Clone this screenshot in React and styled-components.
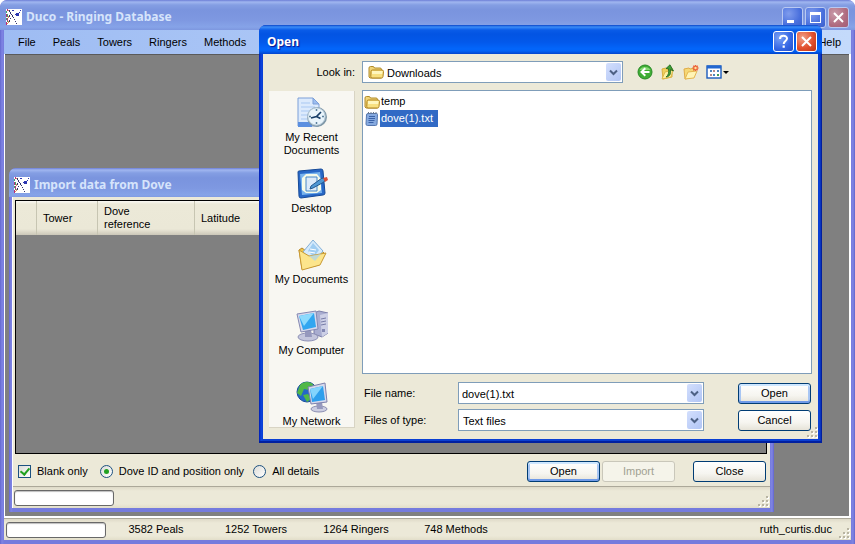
import React, { useState } from 'react'
import styled, { createGlobalStyle, css } from 'styled-components'

const GlobalStyle = createGlobalStyle`
  * {
    box-sizing: border-box;
  }
  body {
    margin: 0;
    font-family: 'Liberation Sans', Arial, sans-serif;
    font-size: 11px;
    line-height: 13px;
    color: #000;
  }
  button, input, select {
    font: inherit;
    color: inherit;
    margin: 0;
  }
`

/* ---------- window chrome ---------- */

const inactiveFrame = css`
  background: linear-gradient(to right, #6468cf 0, #7f84e4 2px, #757bdd 4px, #757bdd calc(100% - 4px), #8085e4 calc(100% - 2px), #6165cb 100%);
`

const MainWindow = styled.div`
  position: relative;
  display: flex;
  flex-direction: column;
  min-height: 100vh;
  padding: 0 4px 4px;
  border-radius: 7px 7px 0 0;
  overflow: hidden;
  ${inactiveFrame}
`

const ImportWindow = styled.section`
  position: absolute;
  left: 9px;
  right: 81px;
  top: 168px;
  bottom: 32px;
  display: flex;
  flex-direction: column;
  padding: 0 4px 4px 3px;
  border-radius: 7px 7px 0 0;
  overflow: hidden;
  ${inactiveFrame}
`

const Dialog = styled.section`
  position: absolute;
  left: 259px;
  right: 33px;
  top: 25px;
  bottom: 101px;
  display: flex;
  flex-direction: column;
  padding: 0 4px 4px;
  border-radius: 7px 7px 0 0;
  background: linear-gradient(to right, #0019b0 0, #0b44dc 2px, #0a3fd2 4px, #0a3fd2 calc(100% - 4px), #0a3fd2 calc(100% - 2px), #00138c 100%);
  box-shadow: inset 0 -2px 0 #001fa0;
`

const TitleBar = styled.header`
  display: flex;
  flex: none;
  align-items: center;
  gap: 4px;
  height: ${({ $tall }) => ($tall ? 30 : 29)}px;
  margin: 0 -4px;
  padding: ${({ $active }) => ($active ? '4px 5px 0 8px' : '4px 6px 0')};
  border-radius: 7px 7px 0 0;
  background: ${({ $active }) =>
    $active
      ? 'linear-gradient(#0a45c8 0, #3a8cf8 2px, #0a5ce8 5px, #0354e3 9px, #0358ea 17px, #0366fb 24px, #0262f5 26px, #0344cc 29px)'
      : 'linear-gradient(#6d7ed6 0, #a0b6f0 2px, #849ee3 5px, #7a94de 10px, #7e98e1 20px, #86a3e8 27px, #7d97df 30px)'};
`

const Title = styled.h1`
  flex: 1;
  margin: 0;
  font-family: 'Noto Sans', 'Open Sans', sans-serif;
  font-size: 12px;
  line-height: 16px;
  font-weight: 700;
  white-space: nowrap;
  color: ${({ $active }) => ($active ? '#fff' : '#d6e4fb')};
  text-shadow: ${({ $active }) => ($active ? '1px 1px 1px #0f1089' : 'none')};
`

const CaptionButtons = styled.div`
  display: flex;
  gap: 2px;
`

const captionColors = {
  blue: 'radial-gradient(circle at 30% 30%, #7ba3f5, #3566e4 60%, #2450c8)',
  red: 'radial-gradient(circle at 30% 30%, #f0a088, #e2512f 55%, #bd3212)',
  pale: 'radial-gradient(circle at 30% 30%, #7f9ced, #4a70dd 60%, #3b60cc)',
  rose: 'radial-gradient(circle at 30% 30%, #c99bab, #b06c80 60%, #a25d76)',
}

const CaptionButton = styled.button`
  display: grid;
  place-items: center;
  width: 21px;
  height: 21px;
  padding: 0;
  border: 1px solid ${({ $tone }) => ($tone === 'blue' || $tone === 'red' ? '#fff' : '#b9c9f2')};
  border-radius: 3px;
  background: ${({ $tone }) => captionColors[$tone]};
`

/* ---------- main window ---------- */

const MenuBar = styled.nav`
  display: flex;
  align-items: center;
  height: 24px;
  padding: 0 2px 0 5px;
  background: linear-gradient(to right, #9ebcf3, #c4dafb);
`

const MenuItem = styled.button`
  padding: 0 8px 0 9px;
  border: 0;
  background: none;
  line-height: 19px;
  &:last-child {
    margin-left: auto;
  }
`

const Workspace = styled.main`
  flex: 1;
  border: solid #fff;
  border-width: 0 2px 2px 1px;
  background: #808080;
  box-shadow: inset 0 1px 0 #5a5a5a;
`

const StatusBar = styled.footer`
  display: flex;
  align-items: center;
  height: ${({ $height }) => $height}px;
  padding: ${({ $main }) => ($main ? '0 1px 0 2px' : '0 1px')};
  border-top: 1px solid #aca899;
  background: linear-gradient(#dedac8, #ece9d8 4px, #ece9d8 80%, #e2dec9);
`

const Progress = styled.progress`
  appearance: none;
  display: block;
  width: 100px;
  height: 16px;
  border: 1px solid #686868;
  border-radius: 3px;
  background: #fff;
  box-shadow: inset 0 1px 1px #bebebe;
  &::-webkit-progress-bar {
    background: transparent;
  }
`

const StatusCell = styled.span`
  width: 100px;
  text-align: center;
`

const StatusFile = styled.span`
  margin-left: auto;
  margin-right: 6px;
`

const GripSvg = styled.svg`
  flex: none;
  align-self: flex-end;
  margin-bottom: 1px;
`

/* ---------- import window ---------- */

const ImportBody = styled.form`
  flex: 1;
  display: flex;
  flex-direction: column;
  border-left: 1px solid #fff;
  background: #ece9d8;
`

const GridFrame = styled.div`
  flex: 1;
  margin: 3px 3px 0 2px;
  border: 1px solid #000;
  background: #808080;
`

const Grid = styled.table`
  width: 100%;
  table-layout: fixed;
  border-collapse: collapse;
`

const HeadCell = styled.th`
  width: ${({ $width }) => ($width ? `${$width}px` : 'auto')};
  height: 34px;
  padding: 0 30px 0 6px;
  font-weight: 400;
  text-align: left;
  background: linear-gradient(#faf9f4, #ece9d8 3px, #ebe8d7 28px, #cbc7b8 34px);
  box-shadow: inset -1px 0 0 #c7c5b2;
  &:first-child,
  &:nth-child(2) {
    padding-right: 0;
  }
`

const Options = styled.div`
  display: flex;
  align-items: center;
  height: 32px;
  padding: 3px 4px 0 5px;
`

const Choice = styled.label`
  display: flex;
  align-items: center;
  gap: 6px;
  margin-right: ${({ $gap }) => $gap}px;
  white-space: nowrap;
`

const Tick = styled.input`
  appearance: none;
  display: grid;
  place-items: center;
  width: 13px;
  height: 13px;
  border: 1px solid #1c5180;
  border-radius: ${({ type }) => (type === 'radio' ? '50%' : '0')};
  background: linear-gradient(135deg, #dcdcd7, #fff);
  &[type='radio']:checked::after {
    content: '';
    width: 5px;
    height: 5px;
    border-radius: 50%;
    background: #21a121;
  }
  &[type='checkbox']:checked::after {
    content: '';
    width: 4px;
    height: 7px;
    margin-bottom: 3px;
    border: solid #21a121;
    border-width: 0 2px 2px 0;
    transform: rotate(40deg);
  }
`

const ButtonRow = styled.div`
  display: flex;
  gap: 2px;
  margin-left: auto;
`

const Button = styled.button`
  width: 73px;
  height: 21px;
  padding: 0;
  border: 1px solid #003c74;
  border-radius: 3px;
  background: linear-gradient(#fff, #f6f5f0 60%, #e6e3d8);
  margin-left: ${({ $apart }) => ($apart ? 16 : 0)}px;
  ${({ $primary }) =>
    $primary &&
    css`
      box-shadow: inset 0 2px 0 #cee7ff, inset 0 -2px 0 #6f9ae8, inset 2px 0 0 #a8c6f3, inset -2px 0 0 #a8c6f3;
    `}
  &:disabled {
    border-color: #c9c7ba;
    background: #f5f4ea;
    color: #a1a192;
  }
`

/* ---------- open dialog ---------- */

const DialogBody = styled.form`
  flex: 1;
  min-height: 0;
  display: grid;
  grid-template-columns: 86px 1fr;
  grid-template-rows: 22px minmax(0, 1fr) 50px;
  column-gap: 7px;
  row-gap: 7px;
  padding: 7px 6px 8px;
  background: #ece9d8;
`

const LookLabel = styled.label`
  align-self: center;
  justify-self: end;
  padding-top: 1px;
`

const LookRow = styled.div`
  display: flex;
  align-items: center;
`

const Combo = styled.div`
  position: relative;
  display: flex;
  flex: none;
  width: ${({ $width }) => $width};
  height: 22px;
  border: 1px solid #7f9db9;
  background: #fff;
`

const fieldStyle = css`
  appearance: none;
  flex: 1;
  min-width: 0;
  border: 0;
  outline: 0;
  border-radius: 0;
  padding: 2px 20px 0 ${({ $indent }) => $indent || 3}px;
  background: transparent;
`

const SelectField = styled.select`
  ${fieldStyle}
`

const TextField = styled.input`
  ${fieldStyle}
`

const ComboArrow = styled.span`
  position: absolute;
  top: 1px;
  right: 1px;
  bottom: 1px;
  display: grid;
  place-items: center;
  width: 15px;
  border-radius: 2px;
  background: linear-gradient(135deg, #d3dffd, #b1c5f5);
  pointer-events: none;
`

const ComboIcon = styled.span`
  position: absolute;
  left: 5px;
  top: 2px;
  height: 16px;
  pointer-events: none;
`

const Tools = styled.div`
  display: flex;
  align-items: center;
  gap: 7px;
  margin-left: 14px;
`

const Tool = styled.button`
  display: block;
  height: 16px;
  padding: 0;
  border: 0;
  background: none;
`

const Places = styled.nav`
  grid-row: 2 / 4;
  display: flex;
  flex-direction: column;
  margin: 1px 0 3px;
  padding-top: 6px;
  border: solid #d8d4c4;
  border-width: 0 1px 1px 0;
  background: #f8f7f2;
  overflow: hidden;
`

const Place = styled.button`
  display: flex;
  flex: none;
  flex-direction: column;
  align-items: center;
  gap: 2px;
  height: 71px;
  padding: 0;
  border: 0;
  background: none;
  &:last-child {
    height: auto;
  }
`

const FileList = styled.ul`
  margin: 0;
  padding: 2px 1px;
  list-style: none;
  border: 1px solid #7f9db9;
  background: #fff;
`

const FileRow = styled.li`
  display: flex;
  align-items: center;
  height: 17px;
`

const FileName = styled.span`
  padding: 2px 5px 2px 1px;
  background: ${({ $selected }) => ($selected ? '#316ac5' : 'transparent')};
  color: ${({ $selected }) => ($selected ? '#fff' : '#000')};
`

const Fields = styled.div`
  display: grid;
  grid-template-columns: 94px 1fr auto;
  grid-auto-rows: 22px;
  row-gap: 5px;
  align-items: center;
  padding: 1px 1px 0 2px;
`

const FieldCombo = styled(Combo)`
  margin-right: 34px;
`

const DialogGrip = styled.div`
  position: absolute;
  right: 4px;
  bottom: 4px;
  height: 13px;
`

/* ---------- drawings ---------- */

const Grip = () => (
  <GripSvg width="12" height="12" viewBox="0 0 12 12">
    {[[9, 1], [5, 5], [9, 5], [1, 9], [5, 9], [9, 9]].map(([x, y]) => (
      <g key={`${x}-${y}`}>
        <rect x={x + 1} y={y + 1} width="2" height="2" fill="#fff" />
        <rect x={x} y={y} width="2" height="2" fill="#b8b4a2" />
      </g>
    ))}
  </GripSvg>
)

const AppIcon = () => (
  <svg width="16" height="16" viewBox="0 0 16 16" shapeRendering="crispEdges">
    <rect width="16" height="16" fill="#fff" />
    <path d="M0 2h1v2H0zM1 5h1v3H1zM0 9h1v2H0zM1 12h1v1H1z" fill="#3aa866" />
    <path d="M1 0h1v2H1zM0 5h1v3H0zM1 9h1v3H1zM0 13h1v3H0z" fill="#b82c7c" />
    <path d="M2 1h1v1H2zM2 7h1v2H2zM2 12h1v2H2zM1 14h1v1H1z" fill="#d98f58" />
    <path d="M3 1h1v2H3zM4 3h1v2H4zM5 5h1v1H5zM6 6h1v2H6zM7 8h1v1H7zM3 6h1v2H3zM4 9h1v1H4zM3 11h1v2H3zM8 10h1v1H8zM9 12h1v1H9zM10 14h1v1h-1z" fill="#34346e" />
    <path d="M6 1h2v1H6zM10 4h3v3h-3zM13 3h1v1h-1zM14 1h1v1h-1zM9 5h1v1H9z" fill="#2b35b0" />
  </svg>
)

const CloseGlyph = () => (
  <svg width="13" height="13" viewBox="0 0 13 13">
    <path d="M2 2l9 9M11 2l-9 9" stroke="#fff" strokeWidth="2" />
  </svg>
)

const MinGlyph = () => (
  <svg width="13" height="13" viewBox="0 0 13 13">
    <path d="M1 9h7v3H1z" fill="#fff" />
  </svg>
)

const MaxGlyph = () => (
  <svg width="13" height="13" viewBox="0 0 13 13">
    <path d="M1 1h11v11H1zM2 4v7h9V4z" fill="#fff" fillRule="evenodd" />
  </svg>
)

const HelpGlyph = () => (
  <svg width="13" height="15" viewBox="0 0 13 15">
    <path d="M3 5C3 .8 10 .8 10 4.600c0 2.400-3.300 2.500-3.300 5.400" fill="none" stroke="#fff" strokeWidth="2" />
    <path d="M5.600 11.500h2.200v2.200H5.600z" fill="#fff" />
  </svg>
)

const Chevron = () => (
  <svg width="9" height="7" viewBox="0 0 9 7">
    <path d="M1 1.500l3.500 3.500L8 1.500" fill="none" stroke="#4d6185" strokeWidth="2" />
  </svg>
)

const FolderIcon = () => (
  <svg width="16" height="16" viewBox="0 0 16 16">
    <path d="M1 13V4q0-1.500 1.500-1.500H5q1 0 1.500 1.500H12q1.500 0 1.500 1.500V14H2z" fill="#f0d478" stroke="#b08a28" />
    <path d="M3 7.500Q3 6 4.500 6H14q1.500 0 1.500 1.500l-.5 5q-.2 1.500-1.500 1.500H4q-1.200 0-1.200-1.500z" fill="#f8e080" stroke="#b08420" />
    <path d="M4 7h10.500l-.3 3H4z" fill="#fff6bd" />
  </svg>
)

const TextFileIcon = () => (
  <svg width="16" height="16" viewBox="0 0 16 16">
    <path d="M4 2.500h8.500q1 0 1 1l-.5 9.500q0 1.500-1.500 1.500H3.500q-1.500 0-1.500-1.500L2.500 4q0-1.500 1.500-1.500z" fill="#86aae0" stroke="#5577ae" />
    <path d="M5 5.500h6M4.500 7.500h6.500M4.500 9.500h6M4.500 11.500h5" stroke="#3a62a8" />
    <path d="M4.500 1v2M7 1v2M9.500 1v2M12 1v2" stroke="#6b7a90" />
  </svg>
)

const BackIcon = () => (
  <svg width="16" height="16" viewBox="0 0 16 16">
    <circle cx="8" cy="8" r="7" fill="#3fad35" stroke="#278a25" />
    <path d="M2.500 6a6 5 0 0 1 11 0z" fill="#86d873" />
    <path d="M12.500 8H5M8.300 4.300L4.500 8l3.800 3.700" fill="none" stroke="#fff" strokeWidth="2" />
  </svg>
)

const UpIcon = () => (
  <svg width="16" height="16" viewBox="0 0 16 16">
    <path d="M2 5l4-1 1 1 5-1v9l-9 2z" fill="#f0d05c" stroke="#d8b040" />
    <path d="M2 15l3-7 8-2-2 7z" fill="#fff2a4" stroke="#dcb748" />
    <path d="M6 13c4-.5 5-3 4.500-7.500L13.500 7 10 .8 6 4.500l2.500.3C9 9 8.500 11 6 13z" fill="#3d9e35" stroke="#1d641d" strokeWidth=".8" />
  </svg>
)

const NewFolderIcon = () => (
  <svg width="16" height="16" viewBox="0 0 16 16">
    <path d="M1 5l5-1 1 1 4-1v9l-9 2z" fill="#f6d876" stroke="#e0ac48" />
    <path d="M2 15l3-7 9-1-3 7z" fill="#fff4b5" stroke="#e6b750" />
    <path d="M12.500 1v6M9.500 4h6M10.300 1.800l4.400 4.400M14.700 1.800l-4.400 4.400" stroke="#ec6038" strokeWidth="1.400" />
    <circle cx="12.500" cy="4" r="1.200" fill="#ffe39c" />
  </svg>
)

const ViewsIcon = () => (
  <svg width="24" height="16" viewBox="0 0 24 16">
    <rect x="1" y="2" width="14" height="12" fill="#fff" stroke="#1b5bbd" strokeWidth="1.400" />
    <path d="M1 1.500h14v3H1z" fill="#2267d0" />
    <path d="M4 6h2v2H4zM11 6h2v2h-2zM7 10h2v2H7z" fill="#4b86c0" />
    <path d="M7 6h2v2H7zM4 10h2v2H4z" fill="#b68a88" />
    <path d="M11 10h2v2h-2z" fill="#4a9b54" />
    <path d="M17 7h6l-3 3z" fill="#000" />
  </svg>
)

const RecentIcon = () => (
  <svg width="32" height="32" viewBox="0 0 32 32">
    <path d="M2 1h15l6 6v22H2z" fill="#dceafc" stroke="#7c9fd8" />
    <path d="M17 1v6h6z" fill="#9dbef0" stroke="#7c9fd8" />
    <path d="M5 6h9M5 10h14M5 14h9M5 18h7M5 22h6" stroke="#a9c8f2" />
    <path d="M2 25h14v5H2z" fill="#5b8fe0" />
    <circle cx="21" cy="20" r="10" fill="#7e97a7" />
    <circle cx="20.500" cy="19.500" r="8.700" fill="#e9f4fb" stroke="#b3c7d6" />
    <path d="M20.500 12v2M20.500 25v2M13 19.500h2M26 19.500h2" stroke="#5d809d" strokeWidth="1.500" />
    <path d="M15 21l5.500-1.500L25 15M20.500 19.500l4 2" fill="none" stroke="#173d67" strokeWidth="1.700" />
  </svg>
)

const DesktopIcon = () => (
  <svg width="32" height="32" viewBox="0 0 32 32">
    <path d="M2 4q0-1 1-1l22-2q2 0 2 2l2 22q0 2-2 2L5 30q-2 0-2-2z" fill="#2868c7" stroke="#164a98" />
    <path d="M4 6l20-2 2 21-20 2z" fill="#79b4ee" />
    <path d="M6 10l4-4h11l4 5v11l-4 3H10l-4-3z" fill="#f6fbe9" />
    <path d="M10 9h11v14H10z" fill="#dcebfa" stroke="#4988c6" />
    <path d="M15 18l-1 3 3-1 11-6 1-3-3-1z" fill="#4f98d4" stroke="#22588f" />
    <path d="M27 10l4-1 1 3-3 2z" fill="#dc5139" />
  </svg>
)

const DocumentsIcon = () => (
  <svg width="32" height="32" viewBox="0 0 32 32">
    <path d="M3 11l3-2 4 3 14-2 5 5-6 11-17 4z" fill="#edc64e" stroke="#b9892c" />
    <path d="M17 1l10 11-10 13L7 13z" fill="#d5eafc" stroke="#82afd8" />
    <path d="M17 4l6 7-5 7-6-6z" fill="#9fcdf2" />
    <path d="M14 10l6 1M13 13l6 1" stroke="#fff" />
    <path d="M3 11l10 6 17-3-6 12-18 5z" fill="#fce58c" stroke="#c99a34" />
    <path d="M13 17l6 5 6-7z" fill="#a9d4ee" opacity=".7" />
  </svg>
)

const ComputerIcon = () => (
  <svg width="32" height="32" viewBox="0 0 32 32">
    <path d="M18 3l5-2 9 2v20l-6 4-8-3z" fill="#a9add0" stroke="#7c7fa9" />
    <path d="M24 5l8-2v20l-6 4z" fill="#cdd0e6" />
    <path d="M25 9l5-1M25 12l5-1M25 15l5-1" stroke="#777ca8" />
    <path d="M26 19h3v3h-3z" fill="#8388b3" />
    <ellipse cx="12" cy="27" rx="10" ry="4" fill="#c4c6dd" stroke="#8e91b6" />
    <path d="M9 20h6l1 7H9z" fill="#9598bd" />
    <path d="M1 4l19-3 2 18-17 3z" fill="#d6d9ed" stroke="#8589b2" />
    <path d="M3 6l15-3 2 14-13 3z" fill="#31a6f0" />
    <path d="M3 6l15-3-10 13z" fill="#8cdafd" />
  </svg>
)

const NetworkIcon = () => (
  <svg width="32" height="32" viewBox="0 0 32 32">
    <circle cx="11" cy="11" r="10" fill="#2467c7" stroke="#194e9b" />
    <path d="M4 4c5-5 12-3 14 1l-5 4-5-1-3 7-4-3zM7 14l5-1 3 5-4 3z" fill="#51b848" />
    <ellipse cx="23" cy="28" rx="8" ry="3" fill="#cccee2" stroke="#8b8eb2" />
    <path d="M20 21h6l1 7h-6z" fill="#9699be" />
    <path d="M12 6l17-4 2 19-16 2z" fill="#d6d9ed" stroke="#7d81ac" />
    <path d="M14 8l13-3 2 14-13 2z" fill="#2e9fec" />
    <path d="M14 8l13-3-10 13z" fill="#83d4fc" />
  </svg>
)

const places = [
  { label: ['My Recent', 'Documents'], Icon: RecentIcon },
  { label: ['Desktop'], Icon: DesktopIcon },
  { label: ['My Documents'], Icon: DocumentsIcon },
  { label: ['My Computer'], Icon: ComputerIcon },
  { label: ['My Network'], Icon: NetworkIcon },
]

const files = [
  { name: 'temp', Icon: FolderIcon },
  { name: 'dove(1).txt', Icon: TextFileIcon },
]

const tools = [
  { label: 'Back', Icon: BackIcon },
  { label: 'Up one level', Icon: UpIcon },
  { label: 'New folder', Icon: NewFolderIcon },
  { label: 'Views', Icon: ViewsIcon },
]

const ImportForm = () => {
  const [blank, setBlank] = useState(true)
  const [mode, setMode] = useState('position')

  return (
    <ImportWindow aria-label="Import data from Dove">
      <TitleBar>
        <AppIcon />
        <Title as="h2">Import data from Dove</Title>
      </TitleBar>
      <ImportBody onSubmit={(e) => e.preventDefault()}>
        <GridFrame>
          <Grid>
            <thead>
              <tr>
                <HeadCell $width={21} />
                <HeadCell $width={61}>Tower</HeadCell>
                <HeadCell $width={97}>Dove reference</HeadCell>
                <HeadCell>Latitude</HeadCell>
              </tr>
            </thead>
          </Grid>
        </GridFrame>
        <Options>
          <Choice $gap={12}>
            <Tick type="checkbox" checked={blank} onChange={() => setBlank(!blank)} />
            Blank only
          </Choice>
          <Choice $gap={9}>
            <Tick type="radio" name="mode" checked={mode === 'position'} onChange={() => setMode('position')} />
            Dove ID and position only
          </Choice>
          <Choice $gap={0}>
            <Tick type="radio" name="mode" checked={mode === 'all'} onChange={() => setMode('all')} />
            All details
          </Choice>
          <ButtonRow>
            <Button type="button" $primary>Open</Button>
            <Button type="button" disabled>Import</Button>
            <Button type="button" $apart>Close</Button>
          </ButtonRow>
        </Options>
        <StatusBar $height={22}>
          <Progress value={0} aria-label="Import progress" />
          <StatusFile />
          <Grip />
        </StatusBar>
      </ImportBody>
    </ImportWindow>
  )
}

const OpenDialog = () => {
  const [selected, setSelected] = useState('dove(1).txt')

  return (
    <Dialog role="dialog" aria-label="Open">
      <TitleBar $active>
        <Title as="h2" $active>Open</Title>
        <CaptionButtons>
          <CaptionButton $tone="blue" aria-label="Help"><HelpGlyph /></CaptionButton>
          <CaptionButton $tone="red" aria-label="Close"><CloseGlyph /></CaptionButton>
        </CaptionButtons>
      </TitleBar>
      <DialogBody onSubmit={(e) => e.preventDefault()}>
        <LookLabel htmlFor="look-in">Look in:</LookLabel>
        <LookRow>
          <Combo $width="58%">
            <ComboIcon><FolderIcon /></ComboIcon>
            <SelectField id="look-in" $indent={24}>
              <option>Downloads</option>
            </SelectField>
            <ComboArrow><Chevron /></ComboArrow>
          </Combo>
          <Tools>
            {tools.map(({ label, Icon }) => (
              <Tool key={label} type="button" aria-label={label}><Icon /></Tool>
            ))}
          </Tools>
        </LookRow>
        <Places>
          {places.map(({ label, Icon }) => (
            <Place key={label[0]} type="button">
              <Icon />
              <span>
                {label.map((line) => (
                  <div key={line}>{line}</div>
                ))}
              </span>
            </Place>
          ))}
        </Places>
        <FileList>
          {files.map(({ name, Icon }) => (
            <FileRow key={name} onClick={() => setSelected(name)}>
              <Icon />
              <FileName $selected={selected === name}>{name}</FileName>
            </FileRow>
          ))}
        </FileList>
        <Fields>
          <label htmlFor="file-name">File name:</label>
          <FieldCombo $width="auto">
            <TextField id="file-name" defaultValue="dove(1).txt" />
            <ComboArrow><Chevron /></ComboArrow>
          </FieldCombo>
          <Button type="submit" $primary>Open</Button>
          <label htmlFor="file-type">Files of type:</label>
          <FieldCombo $width="auto">
            <SelectField id="file-type" $indent={4}>
              <option>Text files</option>
            </SelectField>
            <ComboArrow><Chevron /></ComboArrow>
          </FieldCombo>
          <Button type="button">Cancel</Button>
        </Fields>
      </DialogBody>
      <DialogGrip><Grip /></DialogGrip>
    </Dialog>
  )
}

const App = () => (
  <>
    <GlobalStyle />
    <MainWindow>
      <TitleBar $tall>
        <AppIcon />
        <Title>Duco - Ringing Database</Title>
        <CaptionButtons>
          <CaptionButton $tone="pale" aria-label="Minimize"><MinGlyph /></CaptionButton>
          <CaptionButton $tone="pale" aria-label="Maximize"><MaxGlyph /></CaptionButton>
          <CaptionButton $tone="rose" aria-label="Close"><CloseGlyph /></CaptionButton>
        </CaptionButtons>
      </TitleBar>
      <MenuBar>
        {['File', 'Peals', 'Towers', 'Ringers', 'Methods', 'Help'].map((item) => (
          <MenuItem key={item} type="button">{item}</MenuItem>
        ))}
      </MenuBar>
      <Workspace />
      <ImportForm />
      <StatusBar $height={22} $main>
        <Progress value={0} aria-label="Progress" />
        <StatusCell>3582 Peals</StatusCell>
        <StatusCell>1252 Towers</StatusCell>
        <StatusCell>1264 Ringers</StatusCell>
        <StatusCell>748 Methods</StatusCell>
        <StatusFile>ruth_curtis.duc</StatusFile>
        <Grip />
      </StatusBar>
      <OpenDialog />
    </MainWindow>
  </>
)

export default App
